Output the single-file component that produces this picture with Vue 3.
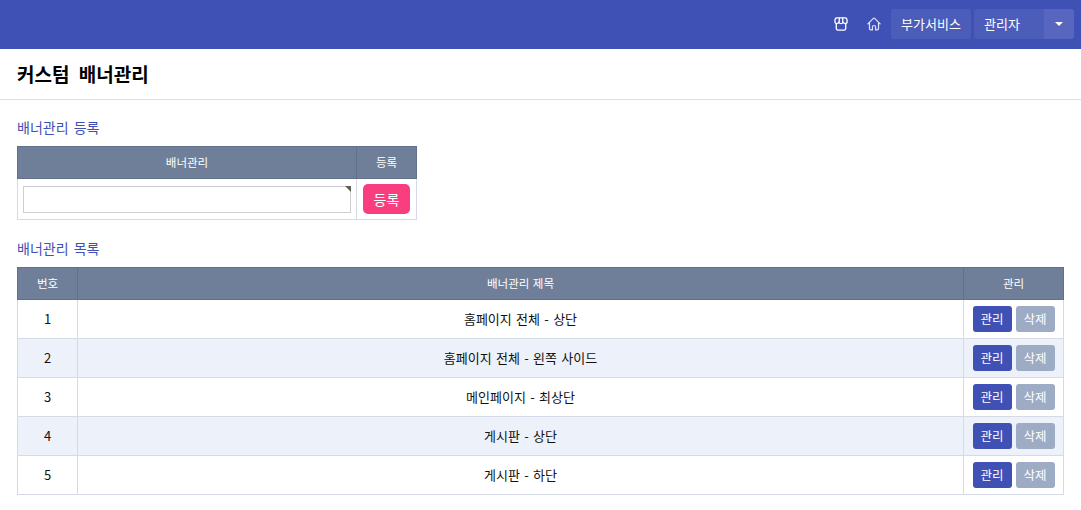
<script setup>
const rows = [
  { id: 1, title: '홈페이지 전체 - 상단' },
  { id: 2, title: '홈페이지 전체 - 왼쪽 사이드' },
  { id: 3, title: '메인페이지 - 최상단' },
  { id: 4, title: '게시판 - 상단' },
  { id: 5, title: '게시판 - 하단' }
]
</script>

<template>
  <div class="page">
    <header class="topbar">
      <svg class="icon store" viewBox="0 0 16 16" fill="none" stroke="currentColor" stroke-width="1.500" stroke-linejoin="round" stroke-linecap="round">
        <path d="M3 1h10c1 0 2 2 2 4.200 0 1.500-1 2.300-2.100 2.300-1 0-1.800-.6-2.300-1.500-.5.900-1.300 1.500-2.600 1.500s-2.100-.6-2.600-1.500c-.5.900-1.300 1.500-2.300 1.500C2 7.500 1 6.700 1 5.200 1 3 2 1 3 1z" />
        <path d="M6 1.200v4.500M10 1.200v4.500" />
        <path d="M2.600 7.600v5.400c0 1.200.8 2 2 2h6.800c1.200 0 2-.8 2-2V7.600" />
      </svg>
      <svg class="icon home" viewBox="0 0 16 16" fill="none" stroke="currentColor" stroke-width="1.400" stroke-linejoin="round" stroke-linecap="round">
        <path d="M1 7.800 7 1.800c.6-.6 1.400-.6 2 0l6 6M2.800 6.500v6.700c0 1 .7 1.600 1.600 1.600h1.800v-3.300c0-1 .8-1.800 1.800-1.800s1.800.8 1.800 1.800v3.300h1.800c.9 0 1.600-.6 1.600-1.600V6.500" />
      </svg>
      <button class="nav-btn service">부가서비스</button>
      <div class="admin">
        <button class="nav-btn admin-name">관리자</button>
        <button class="caret-btn" aria-label="메뉴"><span class="caret"></span></button>
      </div>
    </header>

    <div class="title-bar"><h1>커스텀 배너관리</h1></div>

    <main class="content">
      <h2>배너관리 등록</h2>
      <table class="tbl form-tbl">
        <thead>
          <tr><th>배너관리</th><th class="reg-col">등록</th></tr>
        </thead>
        <tbody>
          <tr>
            <td class="input-cell">
              <div class="area-wrap"><textarea class="area"></textarea></div>
            </td>
            <td class="btn-cell"><button class="reg-btn">등록</button></td>
          </tr>
        </tbody>
      </table>

      <h2 class="second">배너관리 목록</h2>
      <table class="tbl list-tbl">
        <thead>
          <tr>
            <th class="num-col">번호</th>
            <th>배너관리 제목</th>
            <th class="act-col">관리</th>
          </tr>
        </thead>
        <tbody>
          <tr v-for="r in rows" :key="r.id">
            <td class="cell">{{ r.id }}</td>
            <td class="cell">{{ r.title }}</td>
            <td class="acts">
              <button class="act manage">관리</button>
              <button class="act del">삭제</button>
            </td>
          </tr>
        </tbody>
      </table>
    </main>
  </div>
</template>

<style>
html, body { margin: 0; background: #fff; }
</style>

<style scoped>
.page {
  width: 1081px;
  height: 510px;
  overflow: hidden;
  font-family: "Noto Sans CJK KR", "Noto Sans", sans-serif;
  color: #111;
  background: #fff;
}
.topbar {
  height: 49px;
  box-sizing: border-box;
  background: #3f51b5;
  display: flex;
  align-items: center;
  justify-content: flex-end;
  padding: 0 7px 1px 0;
  color: #fff;
}
.icon { width: 14px; height: 14px; display: block; }
.store { margin-right: 19px; }
.home { margin-right: 10px; color: #dfe3f5; }
button { font-family: inherit; border: 0; padding: 0; cursor: pointer; }
.nav-btn {
  height: 30px;
  background: #4c5db9;
  color: #fff;
  font-size: 13px;
  border-radius: 3px;
  padding-bottom: 2px;
}
.service { width: 80px; margin-right: 3px; }
.admin { display: flex; }
.admin-name { width: 70px; text-align: left; padding-left: 10px; border-radius: 3px 0 0 3px; }
.caret-btn {
  width: 30px;
  height: 30px;
  background: #5866c0;
  border-radius: 0 3px 3px 0;
  display: flex;
  align-items: center;
  justify-content: center;
}
.caret {
  width: 0;
  height: 0;
  border-left: 4px solid transparent;
  border-right: 4px solid transparent;
  border-top: 4px solid #fff;
}
.title-bar {
  height: 51px;
  box-sizing: border-box;
  border-bottom: 1px solid #dcdfe6;
  padding: 0 17px 2px;
  display: flex;
  align-items: center;
}
h1 { margin: 0; font-size: 19px; line-height: 1; font-weight: 700; color: #000; word-spacing: 5px; }
.content { padding: 18px 17px 0; }
h2 {
  margin: 0 0 9px;
  font-size: 14px;
  line-height: 19px;
  font-weight: 400;
  color: #3f51b5;
  word-spacing: 2px;
}
h2.second { margin-top: 19px; }
.tbl {
  border-collapse: collapse;
  table-layout: fixed;
  font-size: 12px;
}
.tbl th {
  height: 32px;
  padding: 0 0 1px;
  box-sizing: border-box;
  background: #6f7f99;
  border: 1px solid #62718b;
  color: #fff;
  font-weight: 400;
  font-size: 11.5px;
  word-spacing: 1px;
}
.tbl td {
  border: 1px solid #d5dae6;
  text-align: center;
  padding: 0;
  color: #111;
}
.tbl td.cell { font-size: 13px; padding-bottom: 2px; box-sizing: border-box; word-spacing: 1.4px; }
.form-tbl { width: 400px; }
.reg-col { width: 60px; }
.input-cell { height: 40px; padding: 0 5px !important; }
.area-wrap { position: relative; height: 27px; }
.area-wrap::after {
  content: "";
  position: absolute;
  right: 0;
  top: 0;
  border-top: 6px solid #5f5f55;
  border-left: 6px solid transparent;
}
.area {
  display: block;
  width: 100%;
  height: 27px;
  box-sizing: border-box;
  border: 1px solid #cfcfd2;
  resize: none;
  outline: none;
  margin: 0;
  background: #fff;
}
.reg-btn {
  width: 47px;
  height: 30px;
  background: #f83e7f;
  color: #fff;
  font-size: 14px;
  border-radius: 5px;
  display: block;
  margin: 0 auto;
}
.list-tbl { width: 1047px; }
.num-col { width: 60px; }
.act-col { width: 100px; }
.list-tbl td { height: 38px; }
.list-tbl tbody tr:nth-child(even) td { background: #edf1f9; }
.acts { white-space: nowrap; }
.act {
  width: 39px;
  height: 26px;
  color: #fff;
  font-size: 12.500px;
  border-radius: 3px;
  vertical-align: middle;
  padding-bottom: 1px;
}
.manage { background: #3f51b5; margin-right: 4px; }
.del { background: #9dabc5; }
</style>
